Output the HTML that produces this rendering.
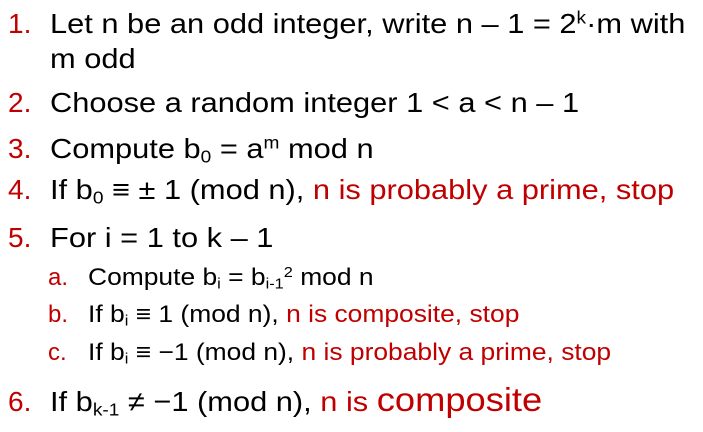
<!DOCTYPE html>
<html><head><meta charset="utf-8"><style>
html,body{margin:0;padding:0;background:#fff;width:703px;height:432px;overflow:hidden;position:relative}
.l{position:absolute;left:0;white-space:nowrap;font-family:"Liberation Sans",Arial,sans-serif;line-height:1;color:#000;height:30px}
.t{position:absolute;transform-origin:0 0}
.b{font-size:28px}
.b .t{transform:scaleX(1.1)}
.s{font-size:24px}
.s .t{transform:scaleX(1.1)}
.r{color:#c00000}
.n{position:absolute;color:#c00000}
sub,sup{font-size:62%;line-height:0}
sub{vertical-align:-0.25em}
sup{vertical-align:0.55em}
</style></head><body>
<div class="l b" style="top:10px"><span class="n" style="left:8px">1.</span><span class="t" style="left:50px">Let n be an odd integer, write n – 1 = 2<sup>k</sup>·m with</span></div>
<div class="l b" style="top:45px"><span class="t" style="left:50px">m odd</span></div>
<div class="l b" style="top:89px"><span class="n" style="left:8px">2.</span><span class="t" style="left:50px">Choose a random integer 1 &lt; a &lt; n – 1</span></div>
<div class="l b" style="top:135px"><span class="n" style="left:8px">3.</span><span class="t" style="left:50px">Compute b<sub>0</sub> = a<sup>m</sup> mod n</span></div>
<div class="l b" style="top:176px"><span class="n" style="left:8px">4.</span><span class="t" style="left:50px">If b<sub>0</sub> ≡ ± 1 (mod n), <span class="r">n is probably a prime, stop</span></span></div>
<div class="l b" style="top:224px"><span class="n" style="left:8px">5.</span><span class="t" style="left:50px">For i = 1 to k – 1</span></div>
<div class="l s" style="top:266px"><span class="n" style="left:48px">a.</span><span class="t" style="left:88px">Compute b<sub>i</sub> = b<sub>i-1</sub><sup>2</sup> mod n</span></div>
<div class="l s" style="top:303px"><span class="n" style="left:48px">b.</span><span class="t" style="left:88px">If b<sub>i</sub> ≡ 1 (mod n), <span class="r">n is composite, stop</span></span></div>
<div class="l s" style="top:341px"><span class="n" style="left:48px">c.</span><span class="t" style="left:88px">If b<sub>i</sub> ≡ −1 (mod n), <span class="r">n is probably a prime, stop</span></span></div>
<div class="l b" style="top:388px"><span class="n" style="left:8px">6.</span><span class="t" style="left:50px">If b<sub>k-1</sub> ≠ −1 (mod n), <span class="r">n is <span style="font-size:33px;line-height:0">composite</span></span></span></div>
</body></html>
